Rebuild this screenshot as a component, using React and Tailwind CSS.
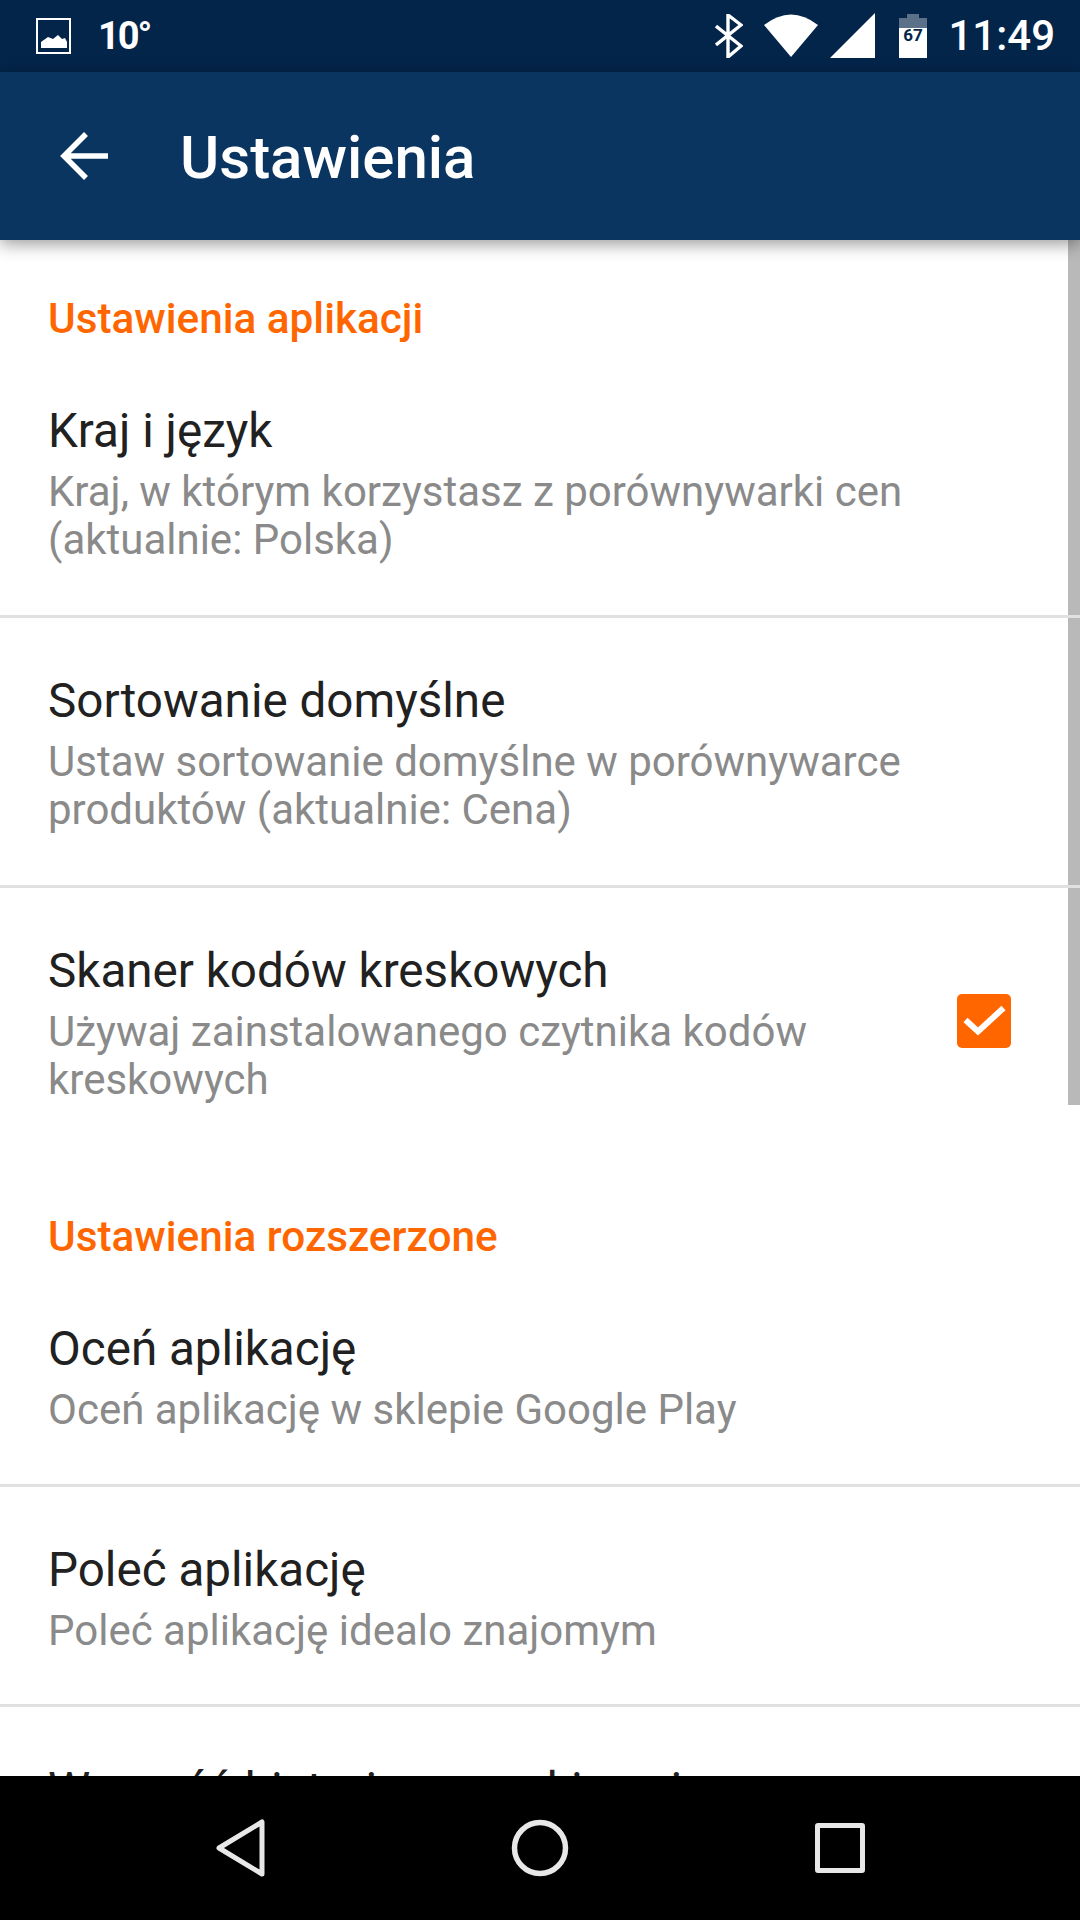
const font = { fontFamily: "Roboto, sans-serif" };

function SectionHeader({ children, className }) {
  return (
    <div className={`px-[48px] text-[42.3px] leading-[48px] font-medium text-[#ff6600] ${className}`}>
      {children}
    </div>
  );
}

function Row({ title, lines, checked, height, first, divider = true }) {
  return (
    <div className={`relative shrink-0 px-[48px] ${height} ${divider ? "border-b-[3px] border-[#e1e1e1]" : ""}`}>
      <div className={`${first ? "pt-[58px]" : "pt-[53px]"} text-[47.6px] leading-[60px] text-[#212121]`}>{title}</div>
      <div className="mt-[7px] text-[42px] leading-[48px] text-[#8a8a8a]">
        {lines.map((l) => (
          <div key={l}>{l}</div>
        ))}
      </div>
      {checked && (
        <div className="absolute right-[69px] top-[106px] flex h-[54px] w-[54px] items-center justify-center rounded-[5px] bg-[#ff6600]">
          <svg width="54" height="54" viewBox="0 0 54 54">
            <path d="M8.5 26 L21 37.5 L46.5 14" fill="none" stroke="#fff" strokeWidth="6" />
          </svg>
        </div>
      )}
    </div>
  );
}

export default function App() {
  return (
    <div className="flex h-[1920px] w-[1080px] flex-col overflow-hidden bg-white" style={font}>
      <div className="flex h-[72px] shrink-0 items-center bg-[#03254a] text-white">
        <svg className="ml-[36px]" width="36" height="36" viewBox="0 0 36 36">
          <rect x="1" y="1" width="33" height="34" fill="none" stroke="#fff" strokeWidth="2" />
          <path d="M5 30 V24 L12 19 L17 21 L22 17 L26 21 L29 20 L31 24 V30 Z" fill="#fff" />
        </svg>
        <span className="ml-[26px] text-[38px] font-bold tracking-[-2px]">10°</span>
        <div className="ml-auto flex items-center">
          <svg width="28" height="44" viewBox="0 0 28 44">
            <path d="M1 31 L26 11 L13 1 V43 L26 32 L1 12" fill="none" stroke="#fff" strokeWidth="3.4" />
          </svg>
          <svg className="ml-[21px]" width="54" height="44" viewBox="0 0 54 44">
            <path d="M0 11 Q27 -10 54 11 L27 43 Z" fill="#fff" />
          </svg>
          <svg className="ml-[12px]" width="46" height="46" viewBox="0 0 46 46">
            <path d="M45 0 V45 H0 Z" fill="#fff" />
          </svg>
          <svg className="ml-[22px]" width="30" height="44" viewBox="0 0 30 44">
            <path d="M9 0 H21 V4 H29 V14 H1 V4 H9 Z" fill="#fff" fillOpacity="0.35" />
            <rect x="1" y="14" width="28" height="30" fill="#fff" />
            <text x="15" y="27" textAnchor="middle" fontSize="17" fontWeight="700" fill="#03254a">67</text>
          </svg>
          <span className="mr-[25px] ml-[20px] text-[42px] leading-none font-medium">11:49</span>
        </div>
      </div>

      <div className="z-10 flex h-[168px] shrink-0 items-center bg-[#0a3560] shadow-[0_4px_16px_rgba(0,0,0,0.4)]">
        <svg className="ml-[60px]" width="49" height="48" viewBox="0 0 49 48">
          <path d="M48 24 H4 M26 2 L4 24 L26 46" fill="none" stroke="#fff" strokeWidth="5.5" />
        </svg>
        <span className="mt-[3px] ml-[71px] text-[60px] font-medium text-white">Ustawienia</span>
      </div>

      <div className="relative flex min-h-0 flex-1 flex-col overflow-hidden">
        <div className="absolute top-0 right-0 h-[865px] w-[12px] bg-[#b9b9b9]" />
        <SectionHeader className="pt-[55px]">Ustawienia aplikacji</SectionHeader>
        <Row
          first
          height="h-[275px]"
          title="Kraj i język"
          lines={["Kraj, w którym korzystasz z porównywarki cen", "(aktualnie: Polska)"]}
        />
        <Row
          height="h-[270px]"
          title="Sortowanie domyślne"
          lines={["Ustaw sortowanie domyślne w porównywarce", "produktów (aktualnie: Cena)"]}
        />
        <Row
          height="h-[268px]"
          divider={false}
          checked
          title="Skaner kodów kreskowych"
          lines={["Używaj zainstalowanego czytnika kodów", "kreskowych"]}
        />
        <SectionHeader className="pt-[57px]">Ustawienia rozszerzone</SectionHeader>
        <Row first height="h-[226px]" title="Oceń aplikację" lines={["Oceń aplikację w sklepie Google Play"]} />
        <Row height="h-[220px]" title="Poleć aplikację" lines={["Poleć aplikację idealo znajomym"]} />
        <Row height="h-[200px]" divider={false} title="Wyczyść historię wyszukiwania" lines={[]} />
      </div>

      <div className="flex h-[144px] shrink-0 items-center bg-black">
        <svg className="ml-[216px]" width="50" height="58" viewBox="0 0 50 58">
          <path d="M46 3 V55 L3 29 Z" fill="none" stroke="#e8e8e8" strokeWidth="5" strokeLinejoin="round" />
        </svg>
        <svg className="ml-[245px]" width="58" height="58" viewBox="0 0 58 58">
          <circle cx="29" cy="29" r="25.5" fill="none" stroke="#e8e8e8" strokeWidth="5.5" />
        </svg>
        <div className="ml-[246px] h-[50px] w-[50px] rounded-[3px] border-[5px] border-[#e8e8e8]" />
      </div>
    </div>
  );
}
